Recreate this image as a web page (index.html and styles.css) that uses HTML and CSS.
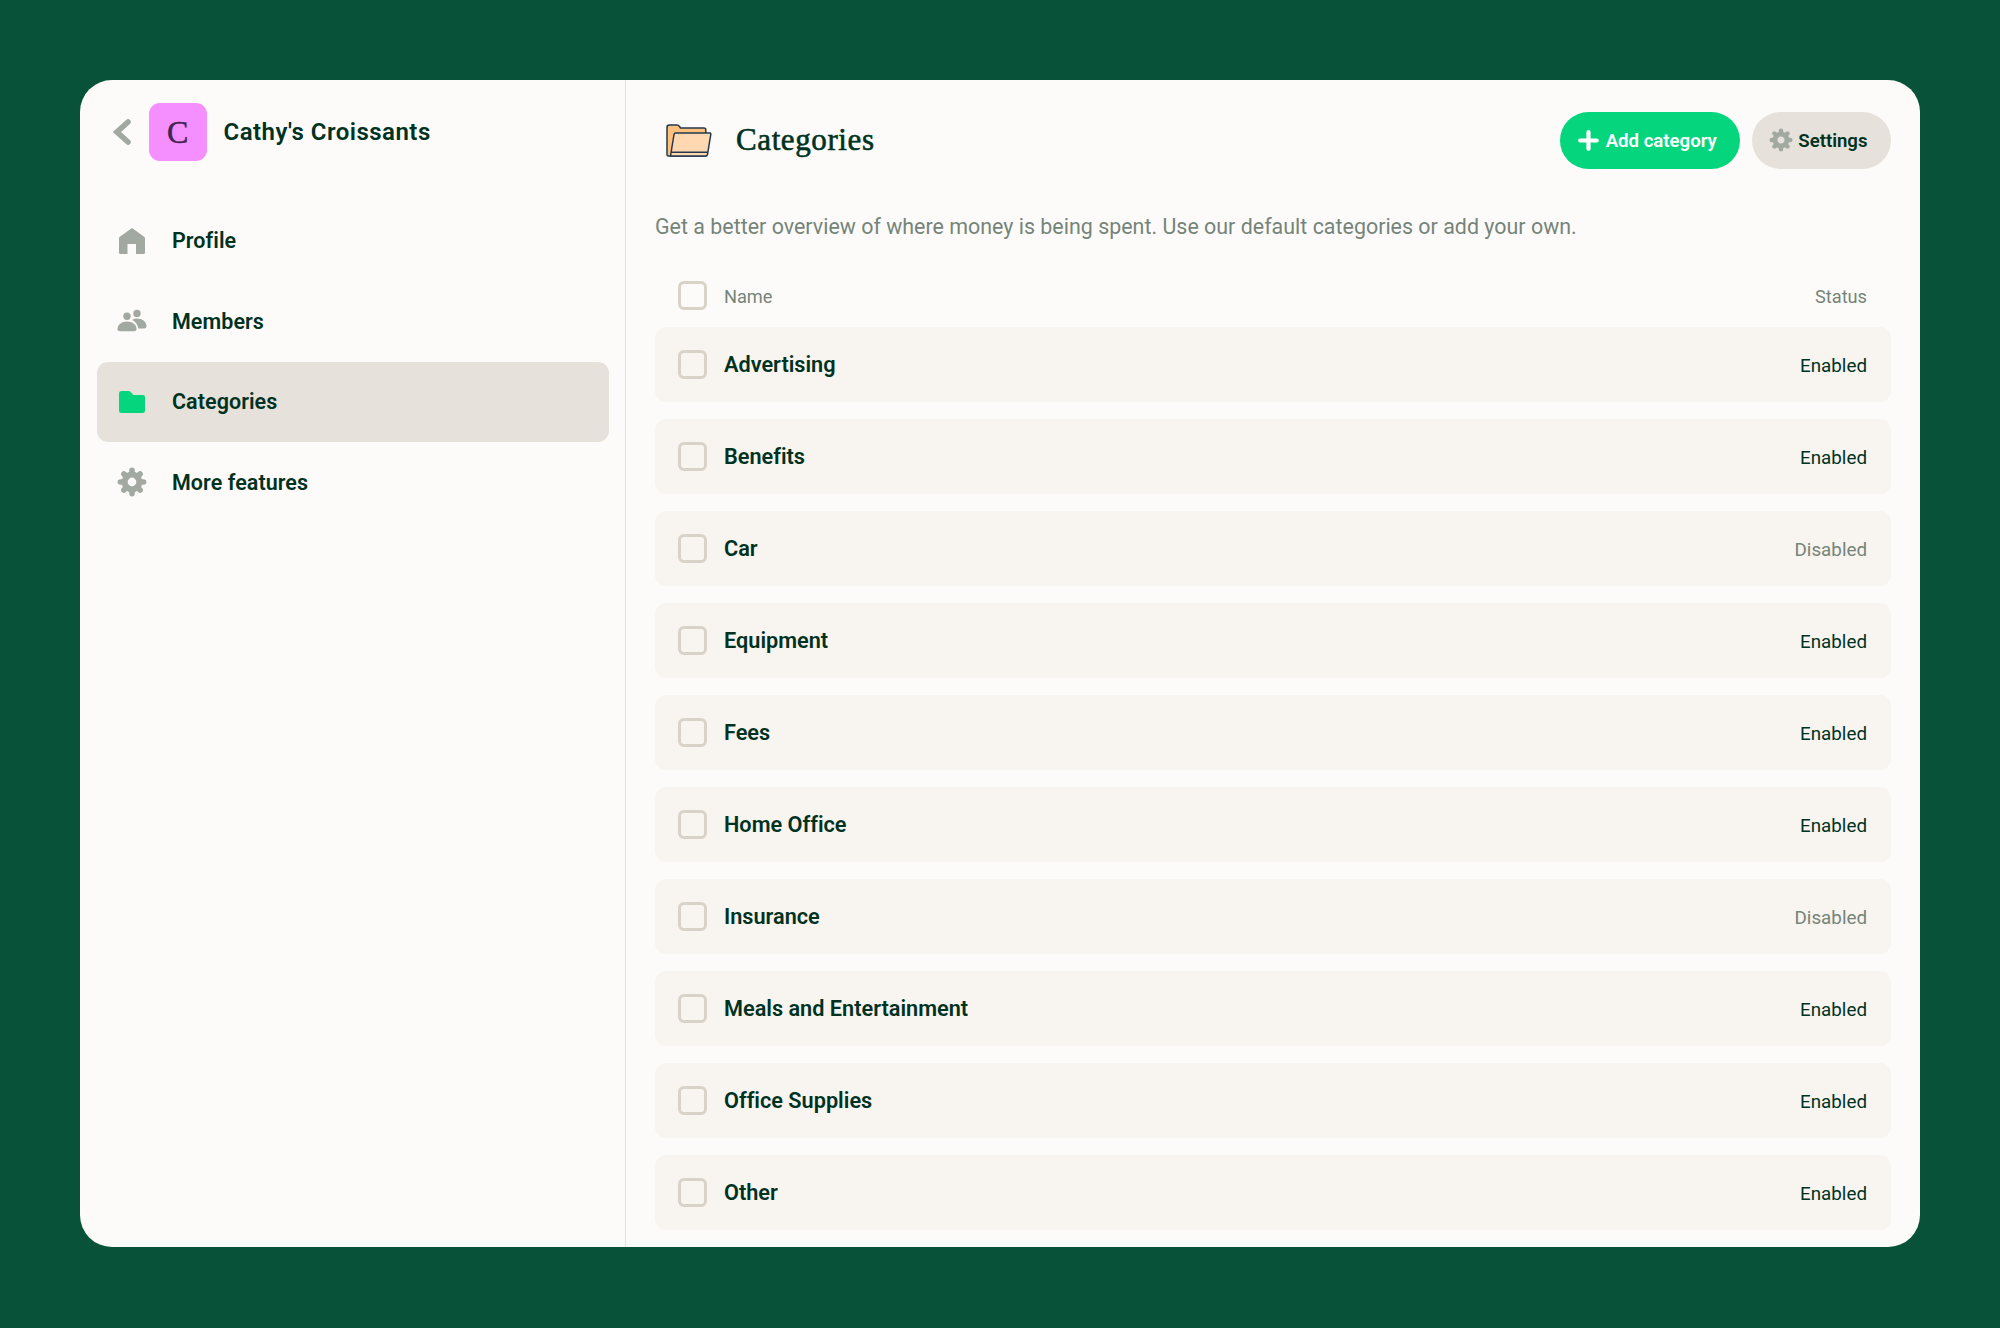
FILE: index.html
```html
<!DOCTYPE html>
<html lang="en">
<head>
<meta charset="utf-8">
<title>Categories</title>
<link rel="stylesheet" href="styles.css">
</head>
<body>
<svg class="defs" aria-hidden="true">
  <symbol id="gear" viewBox="0 0 30 30">
    <g stroke="currentColor" stroke-width="5.6" stroke-linecap="round">
      <path d="M15 3.4v4M15 22.6v4M3.4 15h4M22.6 15h4M6.9 6.9l3 3M20.1 20.1l3 3M6.9 23.1l3-3M20.1 9.9l3-3"/>
    </g>
    <circle cx="15" cy="15" r="7.4" fill="none" stroke="currentColor" stroke-width="6"/>
  </symbol>
</svg>
<div class="window">
  <aside class="sidebar">
    <header class="company">
      <svg class="back" width="18" height="26" viewBox="0 0 18 26"><path d="M15 3 4 13l11 10" fill="none" stroke="currentColor" stroke-width="5.6" stroke-linecap="round"/></svg>
      <span class="avatar">C</span>
      <span class="company-name">Cathy's Croissants</span>
    </header>
    <nav class="nav">
      <a class="nav-item"><svg class="icon" viewBox="0 0 30 30"><path d="M15 2 27.2 10.8Q28 11.4 28 12.500V26.500Q28 28 26.500 28H19V18H10.500V28H3.500Q2 28 2 26.500V12.500Q2 11.400 2.800 10.800Z" fill="currentColor"/></svg>Profile</a>
      <a class="nav-item"><svg class="icon" viewBox="0 0 30 30"><g fill="currentColor"><circle cx="10" cy="10.300" r="3.700"/><circle cx="20" cy="7.400" r="3.700"/><path d="M.5 23.200C.5 18.500 4.500 15.400 10 15.400S19.500 18.500 19.500 23.200Q19.500 25.300 17.400 25.300H2.600Q.5 25.300.5 23.200Z"/><path d="M15.200 14Q17.300 12.600 20 12.600C25.500 12.600 29.500 15.900 29.500 20.300Q29.500 22.500 27.300 22.500H21.300Q20.400 16.500 15.200 14Z"/></g></svg>Members</a>
      <a class="nav-item active"><svg class="icon" viewBox="0 0 30 30"><path d="M4.500 4H11.500Q12.600 4 13.400 4.800L16.500 8H26Q28 8 28 10V23.500Q28 26 25.500 26H4.500Q2 26 2 23.500V6.500Q2 4 4.500 4Z" fill="currentColor"/></svg>Categories</a>
      <a class="nav-item"><svg class="icon"><use href="#gear"/></svg>More features</a>
    </nav>
  </aside>
  <main class="content">
    <header class="page-head">
      <svg class="folder" width="46" height="34" viewBox="0 0 46 34"><g stroke="#22384f" stroke-width="1.500" stroke-linejoin="round"><path d="M1 31V3.500Q1 1 3.500 1H11Q12.500 1 13.500 2.500L14.500 4H38Q39.800 4 39.800 5.800V32H2.500Q1 32 1 31Z" fill="#ffc27d"/><path d="M4.500 32 8 10.500Q8.200 9 9.800 9H44Q45 9 44.800 10.300L41.500 30.500Q41.200 32 39.800 32Z" fill="#ffd7b0"/><path d="M5.200 28.300H41.800" fill="none"/></g></svg>
      <h1>Categories</h1>
      <button class="btn primary"><svg width="21" height="21" viewBox="0 0 21 21"><path d="M10.500 2.200v16.600M2.200 10.500h16.600" stroke="currentColor" stroke-width="4.200" stroke-linecap="round"/></svg>Add category</button>
      <button class="btn"><svg class="gear"><use href="#gear"/></svg>Settings</button>
    </header>
    <p class="intro">Get a better overview of where money is being spent. Use our default categories or add your own.</p>
    <div class="list-head"><span class="check"></span><span class="label">Name</span><span class="status">Status</span></div>
    <ul class="list">
      <li class="row"><span class="check"></span><span class="name">Advertising</span><span class="status">Enabled</span></li>
      <li class="row"><span class="check"></span><span class="name">Benefits</span><span class="status">Enabled</span></li>
      <li class="row"><span class="check"></span><span class="name">Car</span><span class="status off">Disabled</span></li>
      <li class="row"><span class="check"></span><span class="name">Equipment</span><span class="status">Enabled</span></li>
      <li class="row"><span class="check"></span><span class="name">Fees</span><span class="status">Enabled</span></li>
      <li class="row"><span class="check"></span><span class="name">Home Office</span><span class="status">Enabled</span></li>
      <li class="row"><span class="check"></span><span class="name">Insurance</span><span class="status off">Disabled</span></li>
      <li class="row"><span class="check"></span><span class="name">Meals and Entertainment</span><span class="status">Enabled</span></li>
      <li class="row"><span class="check"></span><span class="name">Office Supplies</span><span class="status">Enabled</span></li>
      <li class="row"><span class="check"></span><span class="name">Other</span><span class="status">Enabled</span></li>
    </ul>
  </main>
</div>
</body>
</html>
```

FILE: styles.css
```css
* { box-sizing: border-box; }
body {
  margin: 0;
  height: 1328px;
  padding: 80px 80px 81px;
  background: #085239;
  color: #00321f;
  font-family: Roboto, "Liberation Sans", sans-serif;
  font-variant-ligatures: none;
}
.defs { display: none; }
.window {
  display: flex;
  height: 1167px;
  border-radius: 32px;
  background: #fdfbf9;
  overflow: hidden;
}
.sidebar {
  width: 546px;
  padding: 23px 16px 0 17px;
  border-right: 1px solid #e5e1da;
}
.company {
  display: flex;
  align-items: center;
  height: 57.500px;
  padding-left: 16px;
}
.back { color: #a1a9a1; margin-right: 18px; }
.avatar {
  width: 57.500px;
  height: 57.500px;
  border-radius: 11px;
  background: #f58eff;
  color: #43224f;
  font: 32px/58px "Liberation Serif", serif;
  -webkit-text-stroke: 0.5px;
  text-align: center;
  margin-right: 17px;
}
.company-name { font-size: 24px; font-weight: 600; letter-spacing: 0.480px; padding-top: 1px; }
.nav { margin-top: 40px; }
.nav-item {
  display: flex;
  align-items: center;
  gap: 25px;
  height: 80.500px;
  padding-left: 20px;
  border-radius: 11px;
  font-size: 21.500px;
  font-weight: 600;
  letter-spacing: 0.060px;
}
.icon { width: 30px; height: 30px; color: #a1a9a1; }
.active { background: #e6e1db; }
.active .icon { color: #05d67e; }
.content { flex: 1; padding: 31.500px 29px 0; }
.page-head { display: flex; align-items: center; height: 57.500px; padding-left: 11px; }
.folder { margin-top: 1px; }
h1 {
  margin: 0 auto 0 24px;
  font: 31px/40px "Liberation Serif", serif;
  letter-spacing: 0.600px;
  -webkit-text-stroke: 0.600px;
}
.btn {
  display: flex;
  align-items: center;
  gap: 7px;
  height: 57.500px;
  margin-left: 12px;
  padding: 2px 23.500px 0 17px;
  border: 0;
  border-radius: 29px;
  background: #e6e1db;
  color: #00321f;
  font: 600 18.600px Roboto, sans-serif;
}
.btn svg { position: relative; top: -1px; }
.primary { background: #05d67e; color: #fff; padding-left: 18px; }
.gear { width: 24px; height: 24px; color: #a1a9a1; margin-right: -2px; }
.intro {
  margin: 43px 0 0;
  font-size: 21.400px;
  line-height: 30px;
  letter-spacing: 0.020px;
  color: #758479;
  white-space: nowrap;
}
.list-head, .row { display: flex; align-items: center; gap: 17px; padding: 0 24px 0 23px; }
.list-head { height: 29px; margin: 39px 0 17px; font-size: 18.200px; color: #758479; }
.list-head .status { font-size: 18.200px; }
.label { padding-top: 2px; }
.check {
  width: 29px;
  height: 29px;
  border: 3px solid #d9d2c9;
  border-radius: 6px;
}
.list { display: flex; flex-direction: column; gap: 17px; margin: 0; padding: 0; list-style: none; }
.row { height: 75px; border-radius: 11px; background: #f8f4f0; }
.name { font-size: 21.700px; font-weight: 600; }
.status { margin-left: auto; padding-top: 2px; font-size: 18.800px; }
.off { color: #758479; }
```
